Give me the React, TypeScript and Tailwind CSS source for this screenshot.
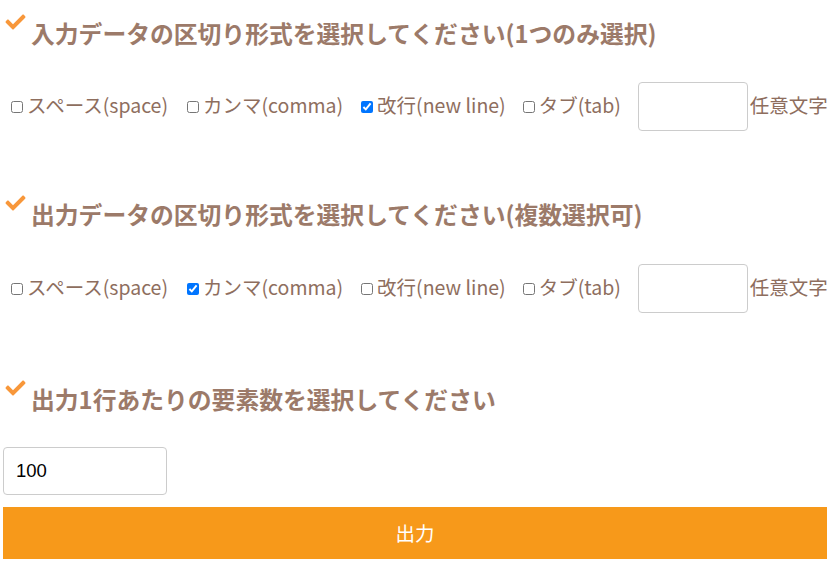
import { useState } from 'react';

const FONT = '"Noto Sans CJK JP", "Noto Sans", sans-serif';

const OPTIONS = [
  { key: 'space', label: 'スペース(space)', gap: 'ml-[8px]' },
  { key: 'comma', label: 'カンマ(comma)', gap: 'ml-[19px]' },
  { key: 'newline', label: '改行(new line)', gap: 'ml-[18px]' },
  { key: 'tab', label: 'タブ(tab)', gap: 'ml-[17px]' },
];

function CheckMark() {
  return (
    <svg
      viewBox="0 0 512 512"
      className="mt-[-5px] h-[20px] w-[21px] shrink-0 self-start"
      fill="#f8973a"
    >
      <path d="M173.898 439.404l-166.4-166.4c-9.997-9.997-9.997-26.206 0-36.204l36.203-36.204c9.997-9.998 26.207-9.998 36.204 0L192 312.69 432.095 72.596c9.997-9.997 26.207-9.997 36.204 0l36.203 36.204c9.997 9.997 9.997 26.206 0 36.204l-294.4 294.401c-9.998 9.997-26.207 9.997-36.204-.001z" />
    </svg>
  );
}

function Heading({ children }: { children: string }) {
  return (
    <h2 className="flex h-[32px] items-center gap-[5px] pl-[2px] text-[23.8px] font-bold leading-[32px] text-[#9c7a69]">
      <CheckMark />
      <span>{children}</span>
    </h2>
  );
}

function DelimiterRow({ initial }: { initial: string }) {
  const [checked, setChecked] = useState<Record<string, boolean>>({ [initial]: true });
  return (
    <div className="flex h-[49px] items-center whitespace-nowrap text-[19.5px] leading-[26px] text-[#8e6e5e]">
      {OPTIONS.map((o) => (
        <label key={o.key} className={`flex shrink-0 items-center pb-[3px] ${o.gap}`}>
          <input
            type="checkbox"
            checked={!!checked[o.key]}
            onChange={(e) => setChecked({ ...checked, [o.key]: e.target.checked })}
            className="m-0 mr-[4px] mt-[3px] h-[12px] w-[12px]"
          />
          {o.label}
        </label>
      ))}
      <input
        type="text"
        className="ml-[17px] h-[49px] w-[110px] shrink-0 rounded-[4px] border border-[#cccccc] bg-white px-2 outline-none"
      />
      <span className="ml-[2px] shrink-0 pb-[3px]">任意文字</span>
    </div>
  );
}

export default function App() {
  const [count, setCount] = useState('100');
  return (
    <div className="bg-white pl-[3px] pr-[7px] pt-[17px]" style={{ fontFamily: FONT }}>
      <Heading>入力データの区切り形式を選択してください(1つのみ選択)</Heading>
      <div className="mt-[33px]">
        <DelimiterRow initial="newline" />
      </div>

      <div className="mt-[67px]">
        <Heading>出力データの区切り形式を選択してください(複数選択可)</Heading>
      </div>
      <div className="mt-[34px]">
        <DelimiterRow initial="comma" />
      </div>

      <div className="mt-[70px]">
        <Heading>出力1行あたりの要素数を選択してください</Heading>
      </div>
      <input
        type="text"
        value={count}
        onChange={(e) => setCount(e.target.value)}
        className="mt-[32px] block h-[48px] w-[164px] rounded-[4px] border border-[#cccccc] bg-white px-[12px] text-[18.5px] text-black outline-none"
        style={{ fontFamily: '"Liberation Sans", Arial, sans-serif' }}
      />
      <button
        type="button"
        className="mt-[12px] block h-[52px] w-full bg-[#f7991a] text-[19.5px] text-white"
      >
        出力
      </button>
    </div>
  );
}
